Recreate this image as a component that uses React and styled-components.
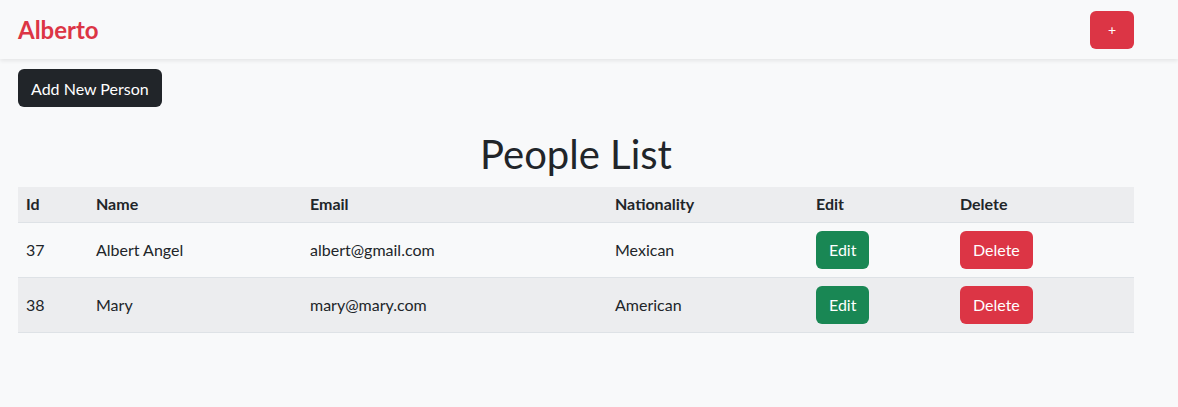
import React from 'react';
import styled, { createGlobalStyle } from 'styled-components';

const GlobalStyle = createGlobalStyle`
  * { box-sizing: border-box; }
  body {
    margin: 0;
    background: #f8f9fa;
    color: #212529;
    font-family: Lato, "Noto Sans", sans-serif;
    font-size: 16px;
    line-height: 1.5;
  }
`;

const people = [
  { id: 37, name: 'Albert Angel', email: 'albert@gmail.com', nationality: 'Mexican' },
  { id: 38, name: 'Mary', email: 'mary@mary.com', nationality: 'American' },
];

const columns = [
  { label: 'Id', width: 70 },
  { label: 'Name', width: 214 },
  { label: 'Email', width: 305 },
  { label: 'Nationality', width: 201 },
  { label: 'Edit', width: 144 },
  { label: 'Delete', width: 182 },
];

const NavBar = styled.nav`
  height: 59px;
  display: flex;
  align-items: center;
  justify-content: space-between;
  padding: 0 44px 0 18px;
  background: #f8f9fa;
  box-shadow: 0 2px 4px rgba(0, 0, 0, 0.08);
`;

const Brand = styled.a`
  color: #dc3545;
  font-weight: 700;
  font-size: 24px;
  text-decoration: none;
`;

const Button = styled.button`
  border: none;
  border-radius: 6px;
  height: 38px;
  padding: 0 ${({ $px }) => $px || 13}px;
  font-family: inherit;
  font-size: ${({ $small }) => ($small ? 14 : 16)}px;
  color: #fff;
  cursor: pointer;
  background: ${({ $variant }) =>
    $variant === 'success' ? '#198754' : $variant === 'dark' ? '#212529' : '#dc3545'};
`;

const Main = styled.main`
  padding: 10px 44px 0 18px;
`;

const Title = styled.h1`
  margin: 23px 0 9px;
  text-align: center;
  font-size: 40px;
  font-weight: 400;
  line-height: 1.2;
`;

const Table = styled.table`
  width: 100%;
  border-collapse: collapse;
  table-layout: fixed;
`;

const Th = styled.th`
  text-align: left;
  font-weight: 700;
  height: 35px;
  padding: 5px 8px;
  background: #ecedef;
  border-bottom: 1px solid #dee2e6;
`;

const Tr = styled.tr`
  background: ${({ $striped }) => ($striped ? '#ecedef' : '#f8f9fa')};
`;

const Td = styled.td`
  padding: 8px;
  height: 55px;
  vertical-align: middle;
  border-bottom: 1px solid #dee2e6;
`;

export default function App() {
  return (
    <>
      <GlobalStyle />
      <NavBar>
        <Brand href="#">Alberto</Brand>
        <Button $px={18} $small>+</Button>
      </NavBar>
      <Main>
        <Button $variant="dark">Add New Person</Button>
        <Title>People List</Title>
        <Table>
          <colgroup>
            {columns.map((c) => (
              <col key={c.label} style={{ width: c.width }} />
            ))}
          </colgroup>
          <thead>
            <tr>
              {columns.map((c) => (
                <Th key={c.label}>{c.label}</Th>
              ))}
            </tr>
          </thead>
          <tbody>
            {people.map((p, i) => (
              <Tr key={p.id} $striped={i % 2 === 1}>
                <Td>{p.id}</Td>
                <Td>{p.name}</Td>
                <Td>{p.email}</Td>
                <Td>{p.nationality}</Td>
                <Td><Button $variant="success">Edit</Button></Td>
                <Td><Button>Delete</Button></Td>
              </Tr>
            ))}
          </tbody>
        </Table>
      </Main>
    </>
  );
}
